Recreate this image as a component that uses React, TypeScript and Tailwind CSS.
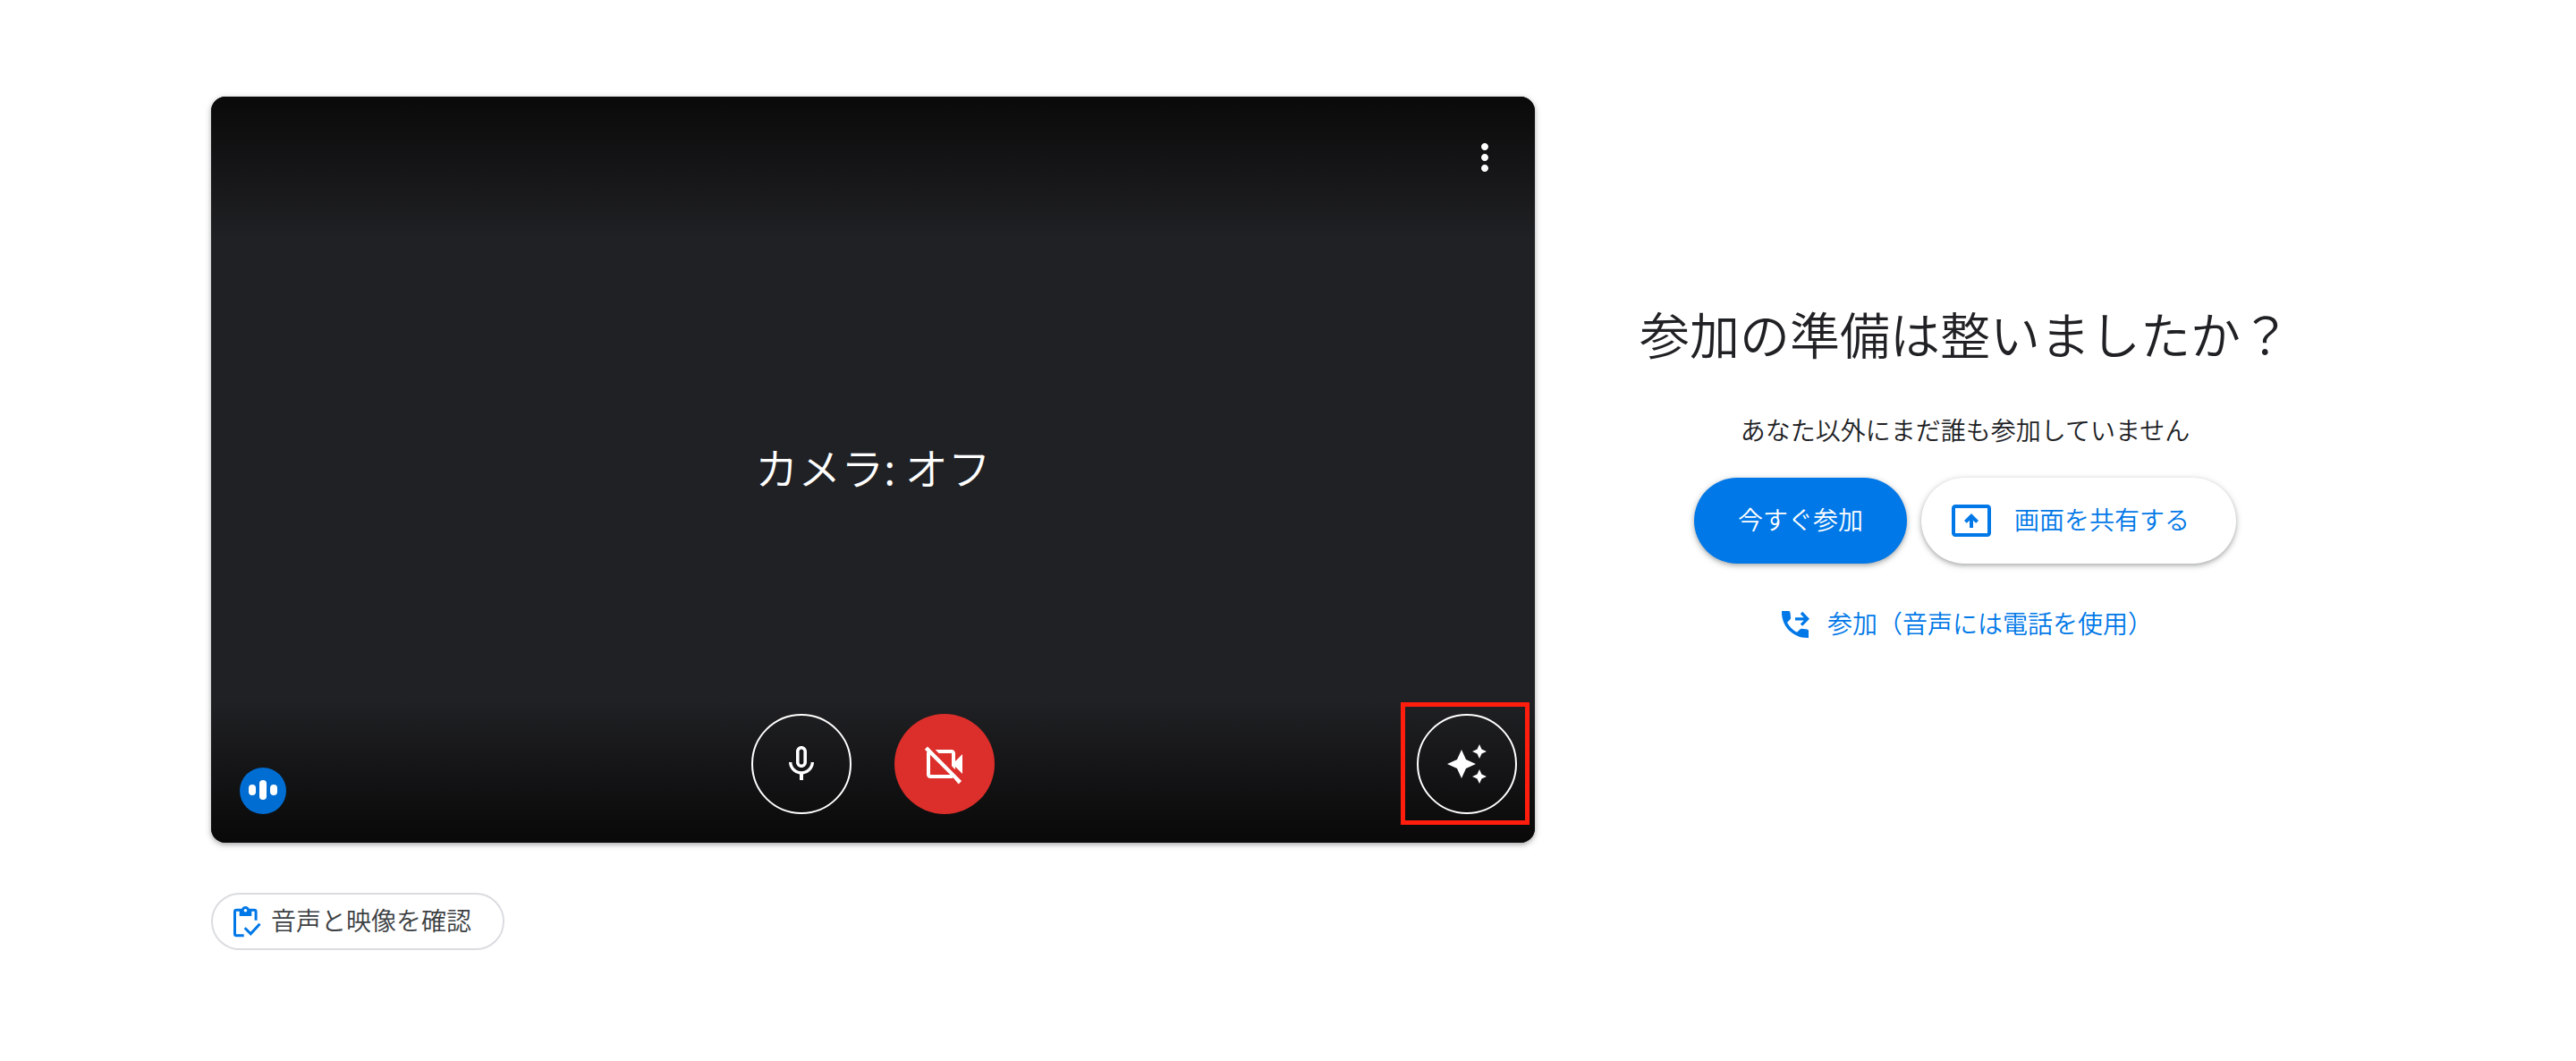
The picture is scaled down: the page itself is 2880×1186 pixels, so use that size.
import type { ReactNode } from "react";
import { clsx } from "clsx";
import { MdMicNone, MdMoreVert } from "react-icons/md";

const SPEAKING_BARS = ["h-3", "h-[22px]", "h-3"];

function VideocamOffIcon() {
  return (
    <svg viewBox="0 0 24 24" className="size-12 overflow-visible" fill="currentColor" aria-hidden="true">
      <path d="M18 10.48V6c0-1.1-.9-2-2-2H6.83l2 2H16v7.17l2 2v-1.65l4 3.98v-11l-4 3.98zM2.5 2.2.9 3.9l1.34 1.17C2.09 5.35 2 5.66 2 6v12c0 1.1.9 2 2 2h12c.34 0 .65-.09.93-.24l2.9 3.5 1.7-1.7zM4 18V6.83L15.17 18H4z" />
    </svg>
  );
}

function SparkleIcon() {
  return (
    <svg viewBox="0 0 24 24" className="size-12" fill="currentColor" aria-hidden="true">
      <path d="M9 4l2.5 5.5L17 12l-5.5 2.5L9 20l-2.5-5.5L1 12l5.5-2.5z" />
      <path d="M19 1l1.25 2.75L23 5l-2.75 1.25L19 9l-1.25-2.75L15 5l2.75-1.25z" />
      <path d="M19 15l1.25 2.75L23 19l-2.75 1.25L19 23l-1.25-2.75L15 19l2.75-1.25z" />
    </svg>
  );
}

function PresentIcon() {
  return (
    <svg viewBox="0 0 24 24" className="size-12 shrink-0" fill="currentColor" aria-hidden="true">
      <path d="M21 3H3c-1.11 0-2 .89-2 2v14c0 1.11.89 2 2 2h18c1.11 0 2-.89 2-2V5c0-1.11-.89-2-2-2zm0 16H3V5h18v14z" />
      <path d="M12 8l-4 4 1.41 1.41L11 11.83V16h2v-4.17l1.59 1.58L16 12z" />
    </svg>
  );
}

function PhoneForwardIcon() {
  return (
    <svg viewBox="0 0 24 24" className="size-10 shrink-0" aria-hidden="true">
      <path
        fill="currentColor"
        d="M21 16.4c0-.6-.4-1-1-1.1l-3.3-.4a2 2 0 0 0-1.65.57l-1.84 1.84a15.05 15.05 0 0 1-6.59-6.59l1.85-1.85c.43-.43.64-1.03.57-1.64l-.4-3.3c-.1-.6-.5-.93-1.1-.93H3.03C2.45 13.18 10.82 21.55 21 20.97z"
      />
      <path fill="none" stroke="currentColor" strokeWidth="2" d="M12 8.3h8.2M16.2 4.2l4 4.1-4 4.1" />
    </svg>
  );
}

function ChecklistIcon() {
  return (
    <svg viewBox="0 0 36 36" className="size-9 shrink-0" fill="none" stroke="currentColor" strokeWidth="3" aria-hidden="true">
      <path d="M13.7 33.8H5.3c-1 0-1.8-.8-1.8-1.8V7c0-1 .8-1.8 1.8-1.8h6M19.5 5.2h5.8c1 0 1.8.8 1.8 1.8v9.7M14.7 25.2l6.6 6.6 10.2-11" />
      <path
        fill="currentColor"
        stroke="none"
        fillRule="evenodd"
        d="M8.7 12V4h2.4a4.6 4.6 0 0 1 8.6 0h2.6v8zM15.4 3.9a1.8 1.8 0 1 0 0 3.6 1.8 1.8 0 0 0 0-3.6z"
      />
    </svg>
  );
}

function RoundButton({ label, off, children }: { label: string; off?: boolean; children: ReactNode }) {
  return (
    <button
      type="button"
      aria-label={label}
      className={clsx(
        "flex size-28 items-center justify-center rounded-full text-white",
        off ? "bg-[#dc2e2a]" : "border-2 border-white"
      )}
    >
      {children}
    </button>
  );
}

function Preview() {
  return (
    <section
      aria-label="プレビュー"
      className="relative flex aspect-[1480/834] flex-col justify-between rounded-2xl bg-[#202124] shadow-[0_2px_4px_rgba(60,64,67,0.3),0_2px_6px_2px_rgba(60,64,67,0.15)]"
    >
      <div className="flex h-40 justify-end rounded-t-2xl bg-linear-to-b from-[#0a0a0a] to-[#202124] px-8 pt-11">
        <button type="button" aria-label="その他のオプション" className="size-12 text-white">
          <MdMoreVert className="size-12" />
        </button>
      </div>

      <p className="pb-2 text-center text-5xl font-[350] text-white">カメラ: オフ</p>

      <div className="grid h-40 grid-cols-3 items-end rounded-b-2xl bg-linear-to-b from-[#202124] to-[#090909] pr-5 pb-8 pl-5">
        <div className="ml-3 flex size-[52px] items-center justify-center gap-1 rounded-full bg-[#006dd2] pb-[2px]">
          {SPEAKING_BARS.map((height, i) => (
            <span key={i} className={clsx("w-2 rounded-full bg-white", height)} />
          ))}
        </div>
        <div className="flex justify-center gap-12">
          <RoundButton label="マイクをオフにする">
            <MdMicNone className="size-12" />
          </RoundButton>
          <RoundButton label="カメラをオンにする" off>
            <VideocamOffIcon />
          </RoundButton>
        </div>
        <div className="relative justify-self-end">
          <RoundButton label="視覚エフェクトを適用">
            <SparkleIcon />
          </RoundButton>
          <span className="pointer-events-none absolute -top-[13px] -right-[14px] -bottom-3 -left-[18px] border-[5px] border-[#ff1d0d]" />
        </div>
      </div>
    </section>
  );
}

function JoinPanel() {
  return (
    <section className="flex flex-col items-center justify-center pt-[2px] pl-[2px]">
      <h1 className="text-[56px] leading-[72px] font-[350] whitespace-nowrap">参加の準備は整いましたか？</h1>
      <p className="mt-14 text-[28px] leading-8 font-[350]">あなた以外にまだ誰も参加していません</p>
      <div className="mt-[38px] flex gap-4 text-[28px] leading-9 font-[350] whitespace-nowrap">
        <button
          type="button"
          className="h-24 rounded-full bg-[#0078e7] px-[49px] pb-1 text-white shadow-[0_2px_4px_rgba(60,64,67,0.3),0_2px_6px_2px_rgba(60,64,67,0.15)]"
        >
          今すぐ参加
        </button>
        <button
          type="button"
          className="flex h-24 items-center gap-6 rounded-full bg-white pr-[52px] pl-8 text-[#0078e7] shadow-[0_2px_4px_rgba(60,64,67,0.3),0_2px_6px_2px_rgba(60,64,67,0.15)]"
        >
          <PresentIcon />
          <span className="pb-1">画面を共有する</span>
        </button>
      </div>
      <a href="#phone" className="mt-[50px] flex h-9 items-center gap-4 text-[28px] leading-9 font-[350] text-[#0078e7]">
        <PhoneForwardIcon />
        <span className="pb-1">参加（音声には電話を使用）</span>
      </a>
    </section>
  );
}

export default function App() {
  return (
    <main
      lang="ja"
      className="grid min-h-screen grid-cols-[1fr_896px] content-start gap-x-8 gap-y-14 bg-white px-[236px] pt-[108px] font-['Noto_Sans_CJK_JP',sans-serif] text-[#202124]"
    >
      <Preview />
      <JoinPanel />
      <div>
        <button
          type="button"
          className="flex h-16 items-center gap-2 rounded-full border-2 border-[#dadce0] pr-[35px] pl-[21px] text-[28px] leading-9 font-[350] text-[#3c4043]"
        >
          <span className="text-[#0078e7]">
            <ChecklistIcon />
          </span>
          <span className="pb-1">音声と映像を確認</span>
        </button>
      </div>
    </main>
  );
}
